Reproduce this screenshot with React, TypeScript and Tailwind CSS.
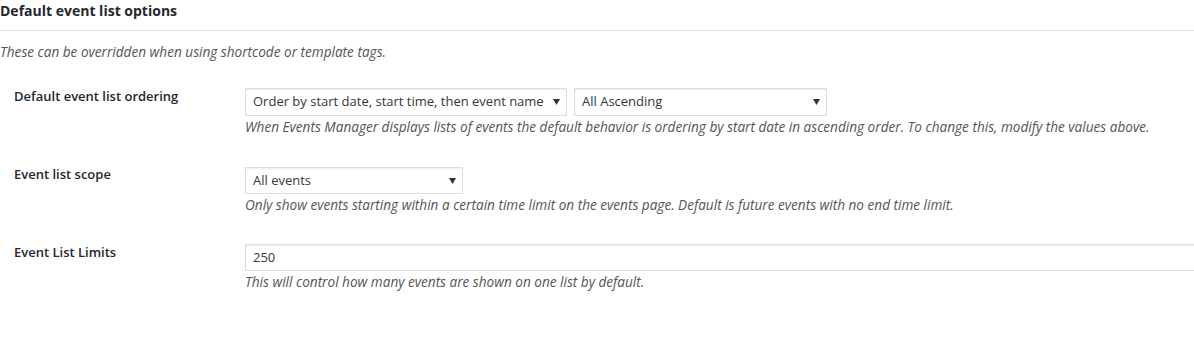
export default function App() {
  const font = { fontFamily: '"Open Sans", "Noto Sans", sans-serif' };
  const Arrow = () => (
    <svg width="7" height="6" viewBox="0 0 7 6" className="shrink-0">
      <path d="M0 0 H7 L3.5 6 Z" fill="#333" />
    </svg>
  );
  return (
    <div className="w-[1194px] h-[349px] bg-white overflow-hidden text-[13px] text-[#444]" style={font}>
      <div className="pt-[1px] pb-[9px] border-b border-[#e1e1e1]">
        <h3 className="text-[14px] leading-[20px] font-bold text-[#23282d]">Default event list options</h3>
      </div>
      <p className="mt-[12px] leading-[18px] italic text-[13.6px] text-[#555]">These can be overridden when using shortcode or template tags.</p>

      <div className="mt-[27px] flex">
        <div className="w-[245px] shrink-0 -mt-[1px] pl-[14px] leading-[18px] font-semibold text-[#23282d]">Default event list ordering</div>
        <div className="flex flex-col">
          <div className="flex gap-[7px]">
            <div className="w-[322px] h-[28px] border border-[#ddd] shadow-[inset_0_1px_2px_rgba(0,0,0,0.07)] flex items-center justify-between pl-[7px] pr-[6px] text-[#32373c]">
              <span>Order by start date, start time, then event name</span>
              <Arrow />
            </div>
            <div className="w-[253px] h-[28px] border border-[#ddd] shadow-[inset_0_1px_2px_rgba(0,0,0,0.07)] flex items-center justify-between pl-[7px] pr-[6px] text-[#32373c]">
              <span>All Ascending</span>
              <Arrow />
            </div>
          </div>
          <p className="mt-[2px] leading-[18px] italic text-[13.6px] text-[#555] whitespace-nowrap">When Events Manager displays lists of events the default behavior is ordering by start date in ascending order. To change this, modify the values above.</p>
        </div>
      </div>

      <div className="mt-[31px] flex">
        <div className="w-[245px] shrink-0 -mt-[2px] pl-[14px] leading-[18px] font-semibold text-[#23282d]">Event list scope</div>
        <div className="flex flex-col">
          <div className="w-[218px] h-[27px] border border-[#ddd] shadow-[inset_0_1px_2px_rgba(0,0,0,0.07)] flex items-center justify-between pl-[7px] pr-[6px] text-[#32373c]">
            <span>All events</span>
            <Arrow />
          </div>
          <p className="mt-[2px] leading-[18px] italic text-[13.6px] text-[#555] whitespace-nowrap">Only show events starting within a certain time limit on the events page. Default is future events with no end time limit.</p>
        </div>
      </div>

      <div className="mt-[30px] flex">
        <div className="w-[245px] shrink-0 -mt-[1px] pl-[14px] leading-[18px] font-semibold text-[#23282d]">Event List Limits</div>
        <div className="flex flex-col">
          <div className="w-[1000px] shrink-0 h-[27px] border border-[#ddd] shadow-[inset_0_1px_2px_rgba(0,0,0,0.07)] flex items-center pl-[7px] text-[#32373c]">
            <span>250</span>
          </div>
          <p className="mt-[2px] leading-[18px] italic text-[13.6px] text-[#555] whitespace-nowrap">This will control how many events are shown on one list by default.</p>
        </div>
      </div>
    </div>
  );
}
